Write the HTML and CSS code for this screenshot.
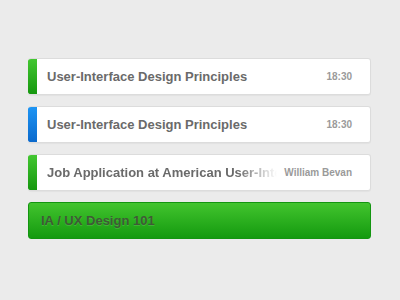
FILE: index.html
```html
<!DOCTYPE html>
<html lang="en">
<head>
    <meta charset="UTF-8">
    <title>Tasks</title>
    <link rel="stylesheet" href="styles.css">
</head>
<body>
<div class="list">
    <!-- 列表项 -->
    <div class="item green">
        <div class="bar"></div>
        <div class="title">User-Interface Design Principles</div>
        <div class="meta">18:30</div>
    </div>
    <div class="item blue">
        <div class="bar"></div>
        <div class="title">User-Interface Design Principles</div>
        <div class="meta">18:30</div>
    </div>
    <div class="item green">
        <div class="bar"></div>
        <div class="title fade">Job Application at American User-Interface</div>
        <div class="meta">William Bevan</div>
    </div>
    <!-- 按钮 -->
    <div class="button">IA / UX Design 101</div>
</div>
</body>
</html>
```

FILE: styles.css
```css
body {
    margin: 0;
    padding: 0;
    background-color: #EBEBEB;
    font-family: "Liberation Sans", Arial, sans-serif;
}
.list {
    width: 343px;
    padding-top: 58px;
    margin-left: 28px;
    display: flex;
    flex-direction: column;
    gap: 11px;
}
.item {
    height: 37px;
    box-sizing: border-box;
    display: flex;
    align-items: center;
    background-color: #FFF;
    border: 1px solid #DCDCDC;
    border-left: none;
    border-radius: 3px;
    box-shadow: 0 1px 1px rgba(0, 0, 0, 0.04);
    overflow: hidden;
}
.item .bar {
    width: 9px;
    align-self: stretch;
    margin-top: -1px;
    margin-bottom: -1px;
    border-radius: 3px 0 0 3px;
}
.green .bar {
    background: linear-gradient(#44C832, #14960E);
}
.blue .bar {
    background: linear-gradient(#1E96F5, #0A68CB);
}
.item .title {
    flex: 1;
    padding-left: 10px;
    font-size: 13px;
    font-weight: bold;
    color: #6A6A6A;
    white-space: nowrap;
    overflow: hidden;
}
.item .fade {
    -webkit-mask-image: linear-gradient(to right, #000 200px, transparent 240px);
    mask-image: linear-gradient(to right, #000 200px, transparent 240px);
}
.item .meta {
    padding: 0 18px 0 6px;
    font-size: 10px;
    font-weight: bold;
    color: #9A9A9A;
    white-space: nowrap;
}
.button {
    height: 37px;
    box-sizing: border-box;
    padding-left: 12px;
    display: flex;
    align-items: center;
    background: linear-gradient(#42C42E, #149A0F);
    border: 1px solid #139510;
    border-radius: 3px;
    font-size: 13px;
    font-weight: bold;
    color: #3F5A36;
    text-shadow: 0 1px 0 rgba(255, 255, 255, 0.15);
}
```
